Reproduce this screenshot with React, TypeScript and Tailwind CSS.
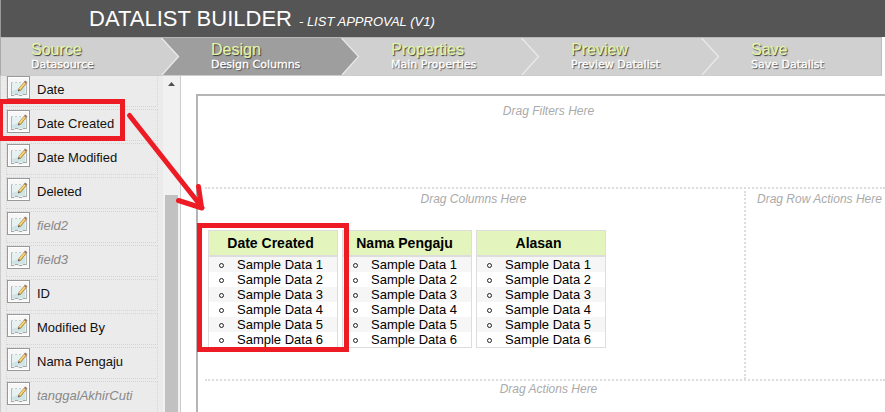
const steps = [
  { title: "Source", sub: "Datasource" },
  { title: "Design", sub: "Design Columns" },
  { title: "Properties", sub: "Main Properties" },
  { title: "Preview", sub: "Preview Datalist" },
  { title: "Save", sub: "Save Datalist" },
];

const fields = [
  { name: "Date" },
  { name: "Date Created" },
  { name: "Date Modified" },
  { name: "Deleted" },
  { name: "field2", custom: true },
  { name: "field3", custom: true },
  { name: "ID" },
  { name: "Modified By" },
  { name: "Nama Pengaju" },
  { name: "tanggalAkhirCuti", custom: true },
];

const columns = ["Date Created", "Nama Pengaju", "Alasan"];
const samples = [1, 2, 3, 4, 5, 6];

function FieldIcon() {
  return (
    <svg width="23" height="23" viewBox="0 0 23 23" className="shrink-0">
      <rect x="0.5" y="0.5" width="22" height="22" fill="#fff" stroke="#999" />
      <rect x="2" y="2" width="19" height="19" fill="#f7f7f7" />
      <path d="M4 7h15v12H4z" fill="#e6f1f1" />
      <path d="M5 15l13-4v7H5z" fill="#d0e3e5" />
      <path d="M4.500 7v12M19.500 8v11" stroke="#b0b7b9" fill="none" />
      <path d="M4 19.500h3l1-1h3l1 1h3l1-1h3" stroke="#a4a9ab" fill="none" />
      <path d="M4 6.500h2m2 0h2m2 0h2" stroke="#c5cccd" />
      <path d="M12.300 14l6.200-7.500" stroke="#a87b2e" strokeWidth="3" />
      <path d="M12.500 13.300l6-7" stroke="#f7d57a" strokeWidth="1.900" />
      <path d="M18 7l1.300-1.600" stroke="#9a7c70" strokeWidth="3" />
      <path d="M11.300 15l1-1.200" stroke="#555" strokeWidth="1.500" />
    </svg>
  );
}

function StepArrow({ kind }: { kind: string }) {
  return (
    <svg width="20" height="37" viewBox="0 0 20 37" className="shrink-0">
      <rect width="20" height="37" fill={kind === "enter" ? "#9e9e9e" : "#d0d0d0"} />
      <path d="M0 0h1L18 18.500 1 37H0z" fill={kind === "leave" ? "#9e9e9e" : "#d0d0d0"} />
      <path d="M0.500 0L17.500 18.500 1 37" fill="none" stroke="#eaeaea" strokeWidth="1.300" />
    </svg>
  );
}

function ColumnCard({ name }: { name: string }) {
  return (
    <div className="h-[118px] w-[130px] border border-[#ddd] bg-white">
      <div className="flex h-[26px] items-center justify-center border-b-2 border-[#ddd] bg-[#e3f5bd] pr-[5px] text-[14px] font-bold leading-[24px]">
        {name}
      </div>
      <ul>
        {samples.map((n) => (
          <li key={n} className="flex h-[15px] items-center pl-[10px] text-[13px] leading-[15px] odd:bg-[#f6f6f6]">
            <span className="mr-[13px] mt-px size-[5px] rounded-full border border-[#222]" />
            Sample Data {n}
          </li>
        ))}
      </ul>
    </div>
  );
}

export default function App() {
  return (
    <div className="relative flex h-[412px] w-[885px] flex-col overflow-hidden bg-white font-['Liberation_Sans',Arial,sans-serif] text-black">
      <header className="flex h-[37px] shrink-0 items-baseline border-l border-[#999] bg-[#555] pl-[88px] text-white">
        <h1 className="text-[22px] leading-[37px]">DATALIST BUILDER</h1>
        <span className="ml-[7px] text-[13px] italic">- LIST APPROVAL (V1)</span>
      </header>

      <nav className="flex h-[39px] w-[882px] shrink-0 border-x border-y border-b-[#ccc] border-l-[#aaa] border-r-[#bbb] border-t-[#b8b8b8] bg-[#d0d0d0]">
        {steps.map((s, i) => (
          <div key={s.title} className={`flex w-[180px] shrink-0 last:w-[160px] ${i === 1 ? "bg-[#9e9e9e]" : ""}`}>
            <div className={`w-[160px] shrink-0 whitespace-nowrap pl-[30px] pt-[3px] ${i === 1 ? "bg-[#9e9e9e]" : "bg-[#d0d0d0]"}`}>
              <div className="text-[16px] leading-[17px] text-[#e3f5a9] [-webkit-text-stroke:0.200px_#e3f5a9] [text-shadow:1px_1px_1px_#333]">{s.title}</div>
              <div className="font-['DejaVu_Sans',sans-serif] text-[11px] leading-[13px] text-white [-webkit-text-stroke:0.300px_#fff] [text-shadow:1px_1px_1px_#444]">{s.sub}</div>
            </div>
            {i < 4 && <StepArrow kind={i === 0 ? "enter" : i === 1 ? "leave" : "plain"} />}
          </div>
        ))}
      </nav>

      <div className="flex h-[336px]">
        <aside className="flex w-[181px] shrink-0 overflow-hidden border-x border-l-[#ccc] border-r-[#ccc] bg-[#ebebeb]">
          <div className="-mt-px w-[162px] shrink-0 pl-[5px]">
            {fields.map((f) => (
              <div key={f.name} className="mb-[2px] flex h-[32px] w-[152px] border border-dotted border-[#d4d4d4]">
                <FieldIcon />
                <span className={`ml-[7px] mt-[6px] text-[13px] leading-[15px] ${f.custom ? "italic text-[#888]" : "text-[#111]"}`}>
                  {f.name}
                </span>
              </div>
            ))}
          </div>
          <div className="flex w-[17px] shrink-0 flex-col bg-[#f1f1f1] pl-[2px]">
            <svg width="13" height="119" viewBox="0 0 13 119">
              <path d="M3 10h7L6.500 6z" fill="#505050" />
            </svg>
            <div className="w-[13px] grow bg-[#c1c1c1]" />
          </div>
        </aside>

        <main className="grow pl-[15px] pt-[18px]">
          <div className="h-[318px] border-l-2 border-t-2 border-[#b5b5b5] pl-[7px] text-[12px] italic leading-[14px] text-[#aaa]">
            <section className="h-[93px] border-b-2 border-dotted border-[#ddd] pl-[7px] pt-[8px] text-center">Drag Filters Here</section>
            <div className="flex h-[192px] border-b-2 border-dotted border-[#ddd] pt-[2px]">
              <section className="w-[541px] shrink-0 border-r-2 border-dotted border-[#ddd] pt-px">
                <div className="pr-[2px] text-center">Drag Columns Here</div>
                <div className="mt-[24px] flex gap-1 pl-[3px] not-italic text-black">
                  {columns.map((c) => <ColumnCard key={c} name={c} />)}
                </div>
              </section>
              <section className="whitespace-nowrap pl-[11px] pt-px">Drag Row Actions Here</section>
            </div>
            <section className="pl-[7px] pt-px text-center">Drag Actions Here</section>
          </div>
        </main>
      </div>

      <svg className="pointer-events-none absolute inset-0" width="885" height="412" fill="none" stroke="#ed1c24">
        <rect x="0.500" y="101.500" width="122" height="37" strokeWidth="5" />
        <rect x="199.500" y="225.500" width="147" height="124" strokeWidth="5" />
        <path d="M129.500 115.500L201 206M178.500 200.500L202 208M198.500 186.500L201.500 207" strokeWidth="5" strokeLinecap="round" />
      </svg>
    </div>
  );
}
